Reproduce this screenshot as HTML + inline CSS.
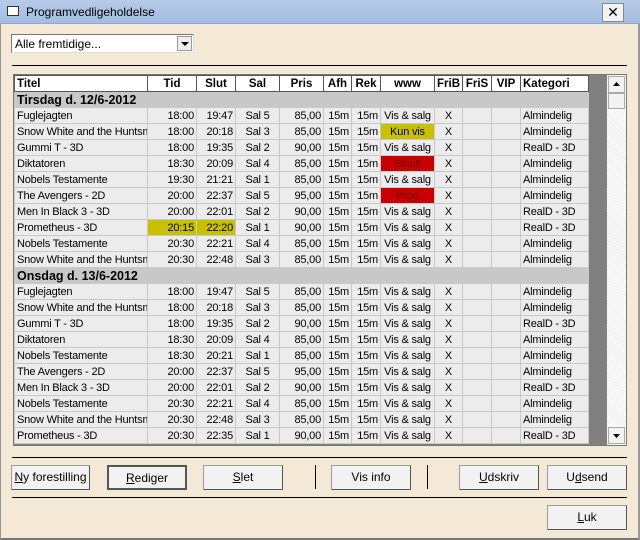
<!DOCTYPE html>
<html><head><meta charset="utf-8">
<style>
*{margin:0;padding:0;box-sizing:border-box}
body{width:640px;height:540px;overflow:hidden;background:#F4E9D7;font-family:"Liberation Sans",Arial,sans-serif;font-size:12px;color:#000;position:relative}
.tb{position:absolute;left:0;top:0;width:640px;height:24px;background:linear-gradient(#B5CBE8,#A3BCE0);border-bottom:1px solid #8FA8CC}
.tb .t{position:absolute;left:26px;top:5px;font-size:12px}
.ic{position:absolute;left:7px;top:6px;width:12px;height:10px;border:1px solid #333;background:#fff}
.cls{position:absolute;left:602px;top:3px;width:22px;height:19px;background:#F2F2F2;border:1px solid #888;font-size:14px;text-align:center;line-height:17px}
.frame{position:absolute;left:0;top:24px;width:640px;height:516px;border-left:1px solid #999;border-right:2px solid #999;border-bottom:2px solid #777}
.combo{position:absolute;left:11px;top:34px;width:183px;height:19px;background:#fff;border:1px solid #777;border-right-color:#ddd;border-bottom-color:#ddd}
.combo span{position:absolute;left:3px;top:2px}
.combo .b{position:absolute;right:1px;top:1px;width:15px;height:15px;background:#EEE;border:1px solid #999}
.combo .b:after{content:"";position:absolute;left:3px;top:5px;border-left:4px solid transparent;border-right:4px solid transparent;border-top:4px solid #000}
.hl{position:absolute;left:12px;width:615px;height:1px;background:#000}
.grid{position:absolute;left:13px;top:74px;width:614px;height:372px;border:1px solid #777;background:#808080;overflow:hidden}
table{border-collapse:collapse;table-layout:fixed;position:absolute;left:0;top:0;width:574px}
td,th{height:16px;padding:0 2px;border:1px solid #C8C8C8;white-space:nowrap;overflow:hidden;font-size:11px;line-height:14px;letter-spacing:-0.2px}
th{background:#fff;border:1px solid #555;font-weight:bold;text-align:center;font-size:11.5px;letter-spacing:0}
th.l{text-align:left}
td{background:#ECECEC}
td.c{text-align:center}td.r{text-align:right}
tr.g td{background:#C8C8C8;font-weight:bold;font-size:12.5px;letter-spacing:0}
.y{background:#C8C000!important}.rd{background:#C80000!important;color:#700}
.sb{position:absolute;left:593px;top:0;width:19px;height:370px;background:#F0F0F0;background-image:repeating-linear-gradient(45deg,#eee 0 1px,#fff 1px 2px)}
.ar{position:absolute;left:1px;width:17px;height:17px;background:#F2F2F2;border:1px solid #aaa}
.btn{position:absolute;height:25px;background:#F2F2F2;border:1px solid #999;border-right-color:#555;border-bottom-color:#555;text-align:center;line-height:23px;font-size:12px}
.vs{position:absolute;top:465px;width:1px;height:24px;background:#000}
</style></head><body>
<div class="frame"></div>
<div class="tb"><div class="ic"></div><div class="t">Programvedligeholdelse</div><div class="cls">✕</div></div>
<div class="combo"><span>Alle fremtidige...</span><div class="b"></div></div>
<div class="hl" style="top:65px"></div>
<div class="grid">
<table>
<colgroup><col style="width:133px"><col style="width:49px"><col style="width:39px"><col style="width:44px"><col style="width:44px"><col style="width:28px"><col style="width:29px"><col style="width:54px"><col style="width:28px"><col style="width:29px"><col style="width:29px"><col style="width:68px"></colgroup>
<tr><th class="l">Titel</th><th>Tid</th><th>Slut</th><th>Sal</th><th>Pris</th><th>Afh</th><th>Rek</th><th>www</th><th>FriB</th><th>FriS</th><th>VIP</th><th class="l">Kategori</th></tr>
<tr class="g"><td colspan="12">Tirsdag d. 12/6-2012</td></tr>
<tr><td>Fuglejagten</td><td class="r">18:00</td><td class="r">19:47</td><td class="c">Sal 5</td><td class="r">85,00</td><td class="r">15m</td><td class="r">15m</td><td class="c">Vis &amp; salg</td><td class="c">X</td><td></td><td></td><td>Almindelig</td></tr>
<tr><td>Snow White and the Huntsman</td><td class="r">18:00</td><td class="r">20:18</td><td class="c">Sal 3</td><td class="r">85,00</td><td class="r">15m</td><td class="r">15m</td><td class="c y">Kun vis</td><td class="c">X</td><td></td><td></td><td>Almindelig</td></tr>
<tr><td>Gummi T - 3D</td><td class="r">18:00</td><td class="r">19:35</td><td class="c">Sal 2</td><td class="r">90,00</td><td class="r">15m</td><td class="r">15m</td><td class="c">Vis &amp; salg</td><td class="c">X</td><td></td><td></td><td>RealD - 3D</td></tr>
<tr><td>Diktatoren</td><td class="r">18:30</td><td class="r">20:09</td><td class="c">Sal 4</td><td class="r">85,00</td><td class="r">15m</td><td class="r">15m</td><td class="c rd">Skjult</td><td class="c">X</td><td></td><td></td><td>Almindelig</td></tr>
<tr><td>Nobels Testamente</td><td class="r">19:30</td><td class="r">21:21</td><td class="c">Sal 1</td><td class="r">85,00</td><td class="r">15m</td><td class="r">15m</td><td class="c">Vis &amp; salg</td><td class="c">X</td><td></td><td></td><td>Almindelig</td></tr>
<tr><td>The Avengers - 2D</td><td class="r">20:00</td><td class="r">22:37</td><td class="c">Sal 5</td><td class="r">95,00</td><td class="r">15m</td><td class="r">15m</td><td class="c rd">Prog</td><td class="c">X</td><td></td><td></td><td>Almindelig</td></tr>
<tr><td>Men In Black 3 - 3D</td><td class="r">20:00</td><td class="r">22:01</td><td class="c">Sal 2</td><td class="r">90,00</td><td class="r">15m</td><td class="r">15m</td><td class="c">Vis &amp; salg</td><td class="c">X</td><td></td><td></td><td>RealD - 3D</td></tr>
<tr><td>Prometheus - 3D</td><td class="r y">20:15</td><td class="r y">22:20</td><td class="c">Sal 1</td><td class="r">90,00</td><td class="r">15m</td><td class="r">15m</td><td class="c">Vis &amp; salg</td><td class="c">X</td><td></td><td></td><td>RealD - 3D</td></tr>
<tr><td>Nobels Testamente</td><td class="r">20:30</td><td class="r">22:21</td><td class="c">Sal 4</td><td class="r">85,00</td><td class="r">15m</td><td class="r">15m</td><td class="c">Vis &amp; salg</td><td class="c">X</td><td></td><td></td><td>Almindelig</td></tr>
<tr><td>Snow White and the Huntsman</td><td class="r">20:30</td><td class="r">22:48</td><td class="c">Sal 3</td><td class="r">85,00</td><td class="r">15m</td><td class="r">15m</td><td class="c">Vis &amp; salg</td><td class="c">X</td><td></td><td></td><td>Almindelig</td></tr>
<tr class="g"><td colspan="12">Onsdag d. 13/6-2012</td></tr>
<tr><td>Fuglejagten</td><td class="r">18:00</td><td class="r">19:47</td><td class="c">Sal 5</td><td class="r">85,00</td><td class="r">15m</td><td class="r">15m</td><td class="c">Vis &amp; salg</td><td class="c">X</td><td></td><td></td><td>Almindelig</td></tr>
<tr><td>Snow White and the Huntsman</td><td class="r">18:00</td><td class="r">20:18</td><td class="c">Sal 3</td><td class="r">85,00</td><td class="r">15m</td><td class="r">15m</td><td class="c">Vis &amp; salg</td><td class="c">X</td><td></td><td></td><td>Almindelig</td></tr>
<tr><td>Gummi T - 3D</td><td class="r">18:00</td><td class="r">19:35</td><td class="c">Sal 2</td><td class="r">90,00</td><td class="r">15m</td><td class="r">15m</td><td class="c">Vis &amp; salg</td><td class="c">X</td><td></td><td></td><td>RealD - 3D</td></tr>
<tr><td>Diktatoren</td><td class="r">18:30</td><td class="r">20:09</td><td class="c">Sal 4</td><td class="r">85,00</td><td class="r">15m</td><td class="r">15m</td><td class="c">Vis &amp; salg</td><td class="c">X</td><td></td><td></td><td>Almindelig</td></tr>
<tr><td>Nobels Testamente</td><td class="r">18:30</td><td class="r">20:21</td><td class="c">Sal 1</td><td class="r">85,00</td><td class="r">15m</td><td class="r">15m</td><td class="c">Vis &amp; salg</td><td class="c">X</td><td></td><td></td><td>Almindelig</td></tr>
<tr><td>The Avengers - 2D</td><td class="r">20:00</td><td class="r">22:37</td><td class="c">Sal 5</td><td class="r">95,00</td><td class="r">15m</td><td class="r">15m</td><td class="c">Vis &amp; salg</td><td class="c">X</td><td></td><td></td><td>Almindelig</td></tr>
<tr><td>Men In Black 3 - 3D</td><td class="r">20:00</td><td class="r">22:01</td><td class="c">Sal 2</td><td class="r">90,00</td><td class="r">15m</td><td class="r">15m</td><td class="c">Vis &amp; salg</td><td class="c">X</td><td></td><td></td><td>RealD - 3D</td></tr>
<tr><td>Nobels Testamente</td><td class="r">20:30</td><td class="r">22:21</td><td class="c">Sal 4</td><td class="r">85,00</td><td class="r">15m</td><td class="r">15m</td><td class="c">Vis &amp; salg</td><td class="c">X</td><td></td><td></td><td>Almindelig</td></tr>
<tr><td>Snow White and the Huntsman</td><td class="r">20:30</td><td class="r">22:48</td><td class="c">Sal 3</td><td class="r">85,00</td><td class="r">15m</td><td class="r">15m</td><td class="c">Vis &amp; salg</td><td class="c">X</td><td></td><td></td><td>Almindelig</td></tr>
<tr><td>Prometheus - 3D</td><td class="r">20:30</td><td class="r">22:35</td><td class="c">Sal 1</td><td class="r">90,00</td><td class="r">15m</td><td class="r">15m</td><td class="c">Vis &amp; salg</td><td class="c">X</td><td></td><td></td><td>RealD - 3D</td></tr>
</table>
<div class="sb">
<div class="ar" style="top:1px"><svg width="15" height="15"><path d="M4 9 L7.5 5 L11 9Z" fill="#000"/></svg></div>
<div class="ar" style="top:18px;height:16px"></div>
<div class="ar" style="top:352px"><svg width="15" height="15"><path d="M4 6 L7.5 10 L11 6Z" fill="#000"/></svg></div>
</div>
</div>
<div class="hl" style="top:457px"></div>
<div class="btn" style="left:11px;top:465px;width:79px"><u>N</u>y forestilling</div>
<div class="btn" style="left:107px;top:465px;width:80px;border:2px solid #555"><u>R</u>ediger</div>
<div class="btn" style="left:203px;top:465px;width:80px"><u>S</u>let</div>
<div class="vs" style="left:315px"></div>
<div class="btn" style="left:331px;top:465px;width:80px">Vis info</div>
<div class="vs" style="left:427px"></div>
<div class="btn" style="left:459px;top:465px;width:80px"><u>U</u>dskriv</div>
<div class="btn" style="left:547px;top:465px;width:80px">U<u>d</u>send</div>
<div class="hl" style="top:497px"></div>
<div class="btn" style="left:547px;top:505px;width:80px"><u>L</u>uk</div>
</body></html>
